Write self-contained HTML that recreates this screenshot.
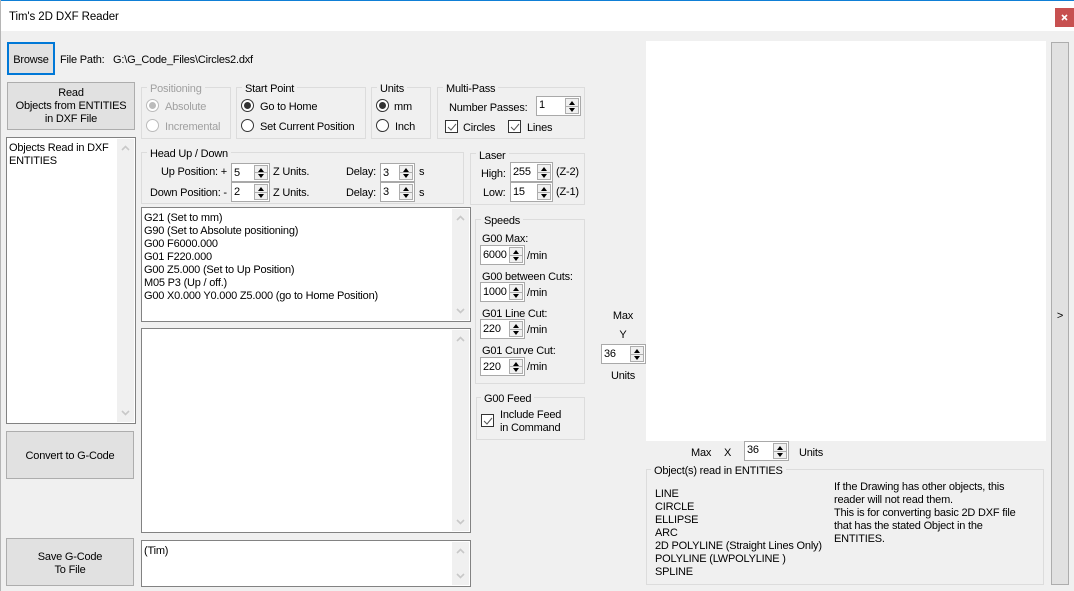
<!DOCTYPE html>
<html><head><meta charset="utf-8"><style>
html,body{margin:0;padding:0}
#w{position:relative;width:1074px;height:591px;overflow:hidden;background:#f0f0f0;font:11px/13px "Liberation Sans",sans-serif;letter-spacing:-.2px;color:#000}
#w div,#w span{position:absolute;box-sizing:border-box}
.t{white-space:nowrap;margin-top:2px}
.m1{margin-top:1px}
.d{color:#a0a0a0}
.c{text-align:center}
.btn{background:#e1e1e1;border:1px solid #adadad;text-align:center}
.g{border:1px solid #dcdcdc}
.l{background:#f0f0f0;padding:0 3px;white-space:nowrap;height:13px;margin-top:2px}
.tb{background:#fff;border:1px solid #828282;white-space:pre;padding:4px 2px 2px 2px}
.sb{background:#f0f0f0;width:17px;top:1px;bottom:1px;right:1px}
.sp{background:#fff;border:1px solid #a9a9a9}
.sp .v{left:2px;top:3px}
.sp .u,.sp .n{right:1px;width:14px;background:#f0f0f0;border:1px solid #adadad}
.sp .u{top:1px;height:9px}
.sp .n{bottom:1px;height:8px}
.sp .u::after{content:"";position:absolute;left:2.5px;top:2px;border:3.5px solid transparent;border-top:0;border-bottom:4px solid #000}
.sp .n::after{content:"";position:absolute;left:2.5px;top:1px;border:3.5px solid transparent;border-bottom:0;border-top:4px solid #000}
.rd{width:13px;height:13px;border:1px solid #333;border-radius:50%;background:#fff}
.rd.on::after{content:"";position:absolute;left:2px;top:2px;width:7px;height:7px;border-radius:50%;background:#333}
.rd.dis{border-color:#bbb}
.rd.dis.on::after{background:#bbb}
.cb{width:13px;height:13px;border:1px solid #333;background:#fff}
svg{position:absolute}
</style></head><body><div id="w">
<div style="left:0;top:0;width:1074px;height:31px;background:#fff"></div>
<div style="left:0;top:0;width:1074px;height:1px;background:#0f7fd6"></div>
<div style="left:0;top:0;width:1px;height:591px;background:#b5b5b5"></div>
<div class="t m1" style="left:9px;top:10px;font-size:11.5px;letter-spacing:-.1px">Tim's 2D DXF Reader</div>
<div style="left:1055px;top:8px;width:19px;height:19px;background:#c75050"></div>
<svg style="left:1061px;top:14px" width="7" height="7"><path d="M1 1L6 6M6 1L1 6" stroke="#fff" stroke-width="1.6"/></svg>

<div class="btn" style="left:7px;top:42px;width:48px;height:33px;border:2px solid #0078d7;line-height:33px">Browse</div>
<div class="t m1" style="left:60px;top:53px">File Path:</div>
<div class="t m1" style="left:113px;top:53px">G:\G_Code_Files\Circles2.dxf</div>

<div class="btn" style="left:7px;top:82px;width:128px;height:48px;padding-top:4px">Read<br>Objects from ENTITIES<br>in DXF File</div>

<div class="tb" style="left:6px;top:137px;width:130px;height:287px;white-space:normal">Objects Read in DXF<br>ENTITIES<div class="sb"><svg style="left:4px;top:6px" width="9" height="6"><path d="M1 5L4.5 1.5L8 5" fill="none" stroke="#c8c8c8" stroke-width="1.6"/></svg><svg style="bottom:6px;left:4px" width="9" height="6"><path d="M1 1L4.5 4.5L8 1" fill="none" stroke="#c8c8c8" stroke-width="1.6"/></svg></div></div>

<div class="btn" style="left:6px;top:431px;width:128px;height:48px;line-height:48px">Convert to G-Code</div>
<div class="btn" style="left:6px;top:538px;width:128px;height:48px;padding-top:12px">Save G-Code<br>To File</div>

<!-- Positioning -->
<div class="g" style="left:141px;top:87px;width:90px;height:52px"></div>
<div class="l d" style="left:147px;top:81px">Positioning</div>
<div class="rd dis on" style="left:146px;top:99px"></div><div class="t d" style="left:165px;top:99px">Absolute</div>
<div class="rd dis" style="left:146px;top:119px"></div><div class="t d" style="left:165px;top:119px">Incremental</div>

<!-- Start Point -->
<div class="g" style="left:236px;top:87px;width:130px;height:52px"></div>
<div class="l" style="left:242px;top:81px">Start Point</div>
<div class="rd on" style="left:241px;top:99px"></div><div class="t" style="left:260px;top:99px">Go to Home</div>
<div class="rd" style="left:241px;top:119px"></div><div class="t" style="left:260px;top:119px">Set Current Position</div>

<!-- Units -->
<div class="g" style="left:371px;top:87px;width:60px;height:52px"></div>
<div class="l" style="left:377px;top:81px">Units</div>
<div class="rd on" style="left:376px;top:99px"></div><div class="t" style="left:394px;top:99px">mm</div>
<div class="rd" style="left:376px;top:119px"></div><div class="t" style="left:395px;top:119px">Inch</div>

<!-- Multi-Pass -->
<div class="g" style="left:437px;top:87px;width:148px;height:52px"></div>
<div class="l" style="left:443px;top:81px">Multi-Pass</div>
<div class="t" style="left:449px;top:100px">Number Passes:</div>
<div class="sp" style="left:536px;top:96px;width:45px;height:20px"><span class="v" style="top:2px">1</span><span class="u"></span><span class="n"></span></div>
<div class="cb" style="left:445px;top:120px"><svg style="left:1px;top:2px" width="10" height="8"><path d="M1 4L4 7L9 1" fill="none" stroke="#555" stroke-width="1"/></svg></div><div class="t" style="left:463px;top:120px">Circles</div>
<div class="cb" style="left:508px;top:120px"><svg style="left:1px;top:2px" width="10" height="8"><path d="M1 4L4 7L9 1" fill="none" stroke="#555" stroke-width="1"/></svg></div><div class="t" style="left:527px;top:120px">Lines</div>

<!-- Head Up / Down -->
<div class="g" style="left:141px;top:152px;width:323px;height:52px"></div>
<div class="l" style="left:147px;top:146px">Head Up / Down</div>
<div class="t m1" style="left:161px;top:165px">Up Position: +</div>
<div class="t" style="left:150px;top:185px">Down Position: -</div>
<div class="sp" style="left:231px;top:163px;width:39px;height:19px"><span class="v">5</span><span class="u"></span><span class="n"></span></div>
<div class="sp" style="left:231px;top:182px;width:39px;height:20px"><span class="v">2</span><span class="u"></span><span class="n"></span></div>
<div class="t m1" style="left:273px;top:165px">Z Units.</div>
<div class="t" style="left:273px;top:185px">Z Units.</div>
<div class="t m1" style="left:346px;top:165px">Delay:</div>
<div class="t" style="left:346px;top:185px">Delay:</div>
<div class="sp" style="left:380px;top:163px;width:35px;height:19px"><span class="v">3</span><span class="u"></span><span class="n"></span></div>
<div class="sp" style="left:380px;top:182px;width:35px;height:20px"><span class="v">3</span><span class="u"></span><span class="n"></span></div>
<div class="t" style="left:419px;top:185px">s</div>
<div class="t m1" style="left:419px;top:165px">s</div>

<!-- Laser -->
<div class="g" style="left:470px;top:153px;width:115px;height:52px"></div>
<div class="l" style="left:476px;top:148px">Laser</div>
<div class="t" style="left:481px;top:166px">High:</div>
<div class="t" style="left:483px;top:185px">Low:</div>
<div class="sp" style="left:510px;top:162px;width:43px;height:20px"><span class="v" style="left:2px">255</span><span class="u"></span><span class="n"></span></div>
<div class="sp" style="left:510px;top:182px;width:43px;height:20px"><span class="v" style="left:2px">15</span><span class="u"></span><span class="n"></span></div>
<div class="t m1" style="left:556px;top:165px">(Z-2)</div>
<div class="t m1" style="left:556px;top:185px">(Z-1)</div>

<!-- Speeds -->
<div class="g" style="left:475px;top:219px;width:110px;height:165px"></div>
<div class="l" style="left:481px;top:213px">Speeds</div>
<div class="t m1" style="left:482px;top:232px">G00 Max:</div>
<div class="sp" style="left:480px;top:245px;width:45px;height:20px"><span class="v" style="left:2px">6000</span><span class="u"></span><span class="n"></span></div>
<div class="t" style="left:527px;top:248px">/min</div>
<div class="t" style="left:482px;top:269px">G00 between Cuts:</div>
<div class="sp" style="left:480px;top:282px;width:45px;height:20px"><span class="v" style="left:2px">1000</span><span class="u"></span><span class="n"></span></div>
<div class="t" style="left:527px;top:285px">/min</div>
<div class="t" style="left:482px;top:306px">G01 Line Cut:</div>
<div class="sp" style="left:480px;top:319px;width:45px;height:20px"><span class="v" style="left:2px">220</span><span class="u"></span><span class="n"></span></div>
<div class="t" style="left:527px;top:322px">/min</div>
<div class="t" style="left:482px;top:343px">G01 Curve Cut:</div>
<div class="sp" style="left:480px;top:357px;width:45px;height:19px"><span class="v" style="left:2px">220</span><span class="u"></span><span class="n"></span></div>
<div class="t" style="left:527px;top:359px">/min</div>

<!-- G00 Feed -->
<div class="g" style="left:476px;top:397px;width:109px;height:43px"></div>
<div class="l" style="left:481px;top:391px">G00 Feed</div>
<div class="cb" style="left:481px;top:414px"><svg style="left:1px;top:2px" width="10" height="8"><path d="M1 4L4 7L9 1" fill="none" stroke="#555" stroke-width="1"/></svg></div>
<div class="t" style="left:500px;top:407px">Include Feed<br>in Command</div>

<!-- text boxes -->
<div class="tb" style="left:141px;top:207px;width:330px;height:115px">G21 (Set to mm)
G90 (Set to Absolute positioning)
G00 F6000.000
G01 F220.000
G00 Z5.000 (Set to Up Position)
M05 P3 (Up / off.)
G00 X0.000 Y0.000 Z5.000 (go to Home Position)<div class="sb"><svg style="left:4px;top:6px" width="9" height="6"><path d="M1 5L4.5 1.5L8 5" fill="none" stroke="#c8c8c8" stroke-width="1.6"/></svg><svg style="bottom:6px;left:4px" width="9" height="6"><path d="M1 1L4.5 4.5L8 1" fill="none" stroke="#c8c8c8" stroke-width="1.6"/></svg></div></div>
<div class="tb" style="left:141px;top:328px;width:330px;height:205px"><div class="sb"><svg style="left:4px;top:6px" width="9" height="6"><path d="M1 5L4.5 1.5L8 5" fill="none" stroke="#c8c8c8" stroke-width="1.6"/></svg><svg style="bottom:6px;left:4px" width="9" height="6"><path d="M1 1L4.5 4.5L8 1" fill="none" stroke="#c8c8c8" stroke-width="1.6"/></svg></div></div>
<div class="tb" style="left:141px;top:540px;width:330px;height:47px">(Tim)<div class="sb"><svg style="left:4px;top:6px" width="9" height="6"><path d="M1 5L4.5 1.5L8 5" fill="none" stroke="#c8c8c8" stroke-width="1.6"/></svg><svg style="bottom:6px;left:4px" width="9" height="6"><path d="M1 1L4.5 4.5L8 1" fill="none" stroke="#c8c8c8" stroke-width="1.6"/></svg></div></div>

<!-- Y -->
<div class="t c" style="left:603px;top:308px;width:40px">Max</div>
<div class="t c" style="left:603px;top:327px;width:40px">Y</div>
<div class="sp" style="left:601px;top:344px;width:45px;height:20px"><span class="v">36</span><span class="u"></span><span class="n"></span></div>
<div class="t c" style="left:603px;top:368px;width:40px">Units</div>

<!-- canvas -->
<div style="left:646px;top:41px;width:400px;height:400px;background:#fff"></div>
<div class="btn" style="left:1051px;top:42px;width:18px;height:543px;line-height:547px">&gt;</div>

<!-- X -->
<div class="t" style="left:691px;top:445px">Max</div>
<div class="t" style="left:724px;top:445px">X</div>
<div class="sp" style="left:744px;top:441px;width:45px;height:20px"><span class="v" style="top:2px">36</span><span class="u"></span><span class="n"></span></div>
<div class="t" style="left:799px;top:445px">Units</div>

<!-- Objects -->
<div class="g" style="left:646px;top:469px;width:398px;height:116px"></div>
<div class="l" style="left:651px;top:463px">Object(s) read in ENTITIES</div>
<div class="t" style="left:655px;top:486px">LINE<br>CIRCLE<br>ELLIPSE<br>ARC<br>2D POLYLINE (Straight Lines Only)<br>POLYLINE (LWPOLYLINE )<br>SPLINE</div>
<div class="t" style="left:834px;top:479px">If the Drawing has other objects, this<br>reader will not read them.<br>This is for converting basic 2D DXF file<br>that has the stated Object in the<br>ENTITIES.</div>
</div></body></html>
